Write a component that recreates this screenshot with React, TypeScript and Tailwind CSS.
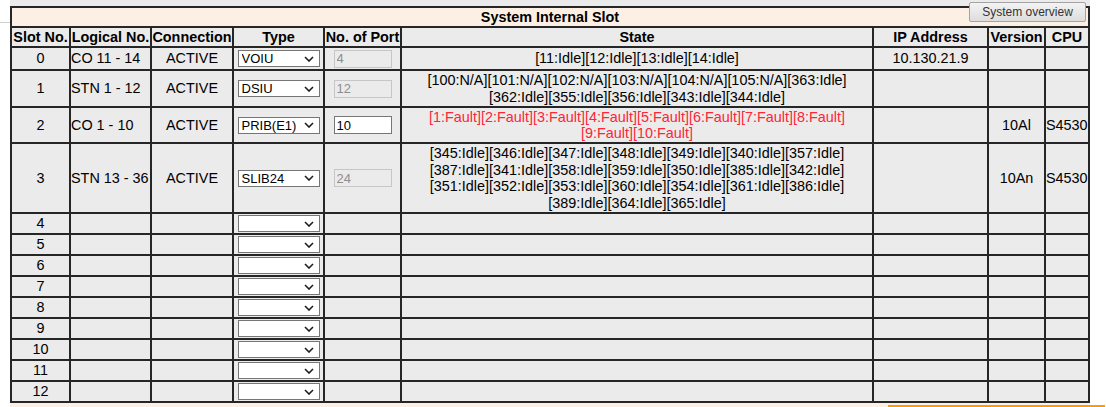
import { useState } from 'react'

interface SlotRow {
  slot: number
  logical?: string
  connection?: string
  type?: string
  ports?: string
  portsEditable?: boolean
  state?: string[]
  fault?: boolean
  ip?: string
  version?: string
  cpu?: string
  height: string
}

const rows: SlotRow[] = [
  {
    slot: 0, logical: 'CO 11 - 14', connection: 'ACTIVE', type: 'VOIU', ports: '4',
    state: ['[11:Idle][12:Idle][13:Idle][14:Idle]'], ip: '10.130.21.9', height: 'h-[21px]',
  },
  {
    slot: 1, logical: 'STN 1 - 12', connection: 'ACTIVE', type: 'DSIU', ports: '12',
    state: [
      '[100:N/A][101:N/A][102:N/A][103:N/A][104:N/A][105:N/A][363:Idle]',
      '[362:Idle][355:Idle][356:Idle][343:Idle][344:Idle]',
    ],
    height: 'h-[35px]',
  },
  {
    slot: 2, logical: 'CO 1 - 10', connection: 'ACTIVE', type: 'PRIB(E1)', ports: '10', portsEditable: true,
    state: [
      '[1:Fault][2:Fault][3:Fault][4:Fault][5:Fault][6:Fault][7:Fault][8:Fault]',
      '[9:Fault][10:Fault]',
    ],
    fault: true, version: '10Al', cpu: 'S4530', height: 'h-[34px]',
  },
  {
    slot: 3, logical: 'STN 13 - 36', connection: 'ACTIVE', type: 'SLIB24', ports: '24',
    state: [
      '[345:Idle][346:Idle][347:Idle][348:Idle][349:Idle][340:Idle][357:Idle]',
      '[387:Idle][341:Idle][358:Idle][359:Idle][350:Idle][385:Idle][342:Idle]',
      '[351:Idle][352:Idle][353:Idle][360:Idle][354:Idle][361:Idle][386:Idle]',
      '[389:Idle][364:Idle][365:Idle]',
    ],
    version: '10An', cpu: 'S4530', height: 'h-[68px]',
  },
  ...[4, 5, 6, 7, 8, 9, 10, 11, 12].map((n) => ({ slot: n, height: 'h-[19px]' })),
]

const headers = ['Slot No.', 'Logical No.', 'Connection', 'Type', 'No. of Port', 'State', 'IP Address', 'Version', 'CPU']

function Chevron() {
  return (
    <svg width="10" height="6" viewBox="0 0 10 6" className="pointer-events-none absolute right-[6px] top-1/2 -translate-y-1/2">
      <polyline points="1,1 5,5 9,1" fill="none" stroke="#1e1e1e" strokeWidth="1.6" />
    </svg>
  )
}

function TypeSelect({ value }: { value?: string }) {
  const [v, setV] = useState(value ?? '')
  return (
    <div className="relative">
      <select
        value={v}
        onChange={(e) => setV(e.target.value)}
        className="block h-[17px] w-[82px] appearance-none rounded-none border border-[#767676] bg-white pl-[3px] text-[13px] leading-[15px] text-black outline-none"
      >
        <option value=""></option>
        <option value="VOIU">VOIU</option>
        <option value="DSIU">DSIU</option>
        <option value="PRIB(E1)">PRIB(E1)</option>
        <option value="SLIB24">SLIB24</option>
      </select>
      <Chevron />
    </div>
  )
}

function PortInput({ value, editable }: { value: string; editable?: boolean }) {
  return editable ? (
    <input
      defaultValue={value}
      className="h-[18px] w-[58px] border border-[#767676] bg-white px-[2px] text-[13px] text-black outline-none"
    />
  ) : (
    <input
      value={value}
      disabled
      readOnly
      className="h-[18px] w-[58px] border border-[#c6c6c6] bg-[#ebebeb] px-[2px] text-[13px] text-[#8d8d8d] outline-none"
    />
  )
}

export default function App() {
  const cell = 'flex items-center bg-[#ebebeb]'

  return (
    <div className="flex h-[407px] w-[1106px] flex-col overflow-hidden bg-white font-['Liberation_Sans',Arial,sans-serif] text-[14.4px] leading-[16.5px] text-black">
      <div className="flex">
        {/* left gutter */}
        <div className="w-[10px] pt-[22px]">
          <div className="h-px bg-[#cfcfcf]" />
        </div>

        <div className="flex w-[1080px] flex-col">
          <div className="h-[6px] bg-[#ebebeb]" />

          <div className="grid grid-cols-[57px_79px_80px_89px_75px_470px_113px_55px_42px] gap-[2px] bg-[#262626] p-[2px]">
            {/* title row */}
            <div className="relative col-span-9 flex h-[18px] items-center justify-center bg-[#fcf0e4] font-bold">
              System Internal Slot
              <button className="absolute right-[2px] top-[-6px] h-[20px] w-[117px] rounded-[2px] border border-[#a3a3a3] bg-gradient-to-b from-[#f3f3f3] to-[#dddddd] text-[12px] font-normal leading-[18px] text-[#333]">
                System overview
              </button>
            </div>

            {/* column headers */}
            {headers.map((h) => (
              <div key={h} className={`${cell} h-[18px] justify-center whitespace-nowrap font-bold`}>
                {h}
              </div>
            ))}

            {/* slot rows */}
            {rows.map((r) => (
              <div key={r.slot} className="contents">
                <div className={`${cell} ${r.height} justify-center`}>{r.slot}</div>
                <div className={`${cell} ${r.height} whitespace-nowrap`}>{r.logical}</div>
                <div className={`${cell} ${r.height} justify-center`}>{r.connection}</div>
                <div className={`${cell} ${r.height} justify-center`}>
                  <TypeSelect value={r.type} />
                </div>
                <div className={`${cell} ${r.height} justify-center`}>
                  {r.ports && <PortInput value={r.ports} editable={r.portsEditable} />}
                </div>
                <div className={`${cell} ${r.height} flex-col justify-center text-center ${r.fault ? 'text-[#ff2438]' : ''}`}>
                  {r.state?.map((line) => (
                    <div key={line} className="whitespace-nowrap">{line}</div>
                  ))}
                </div>
                <div className={`${cell} ${r.height} justify-center`}>{r.ip}</div>
                <div className={`${cell} ${r.height} justify-center`}>{r.version}</div>
                <div className={`${cell} ${r.height}`}>{r.cpu}</div>
              </div>
            ))}
          </div>
        </div>
      </div>

      {/* bottom edge */}
      <div className="flex flex-1">
        <div className="w-[10px]" />
        <div className="w-[1080px] bg-[#fcf0e4] pt-[2px]">
          <div className="ml-[878px] h-[2px] bg-[#ff9a00]" />
        </div>
        <div className="w-[16px] pt-[2px]">
          <div className="h-[2px] w-[15px] bg-[#ff9a00]" />
        </div>
      </div>
    </div>
  )
}
